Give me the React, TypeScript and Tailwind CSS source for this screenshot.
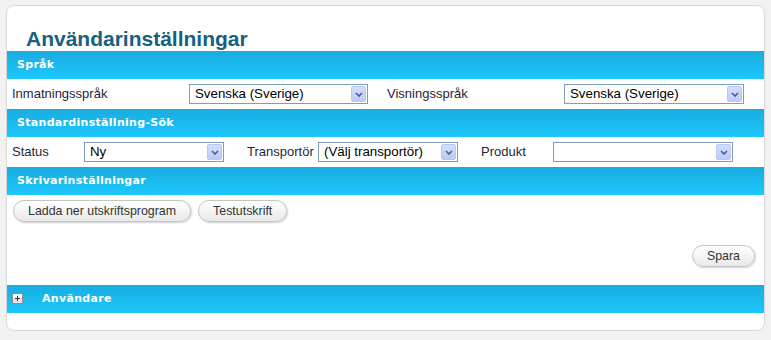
const arial = { fontFamily: '"Liberation Sans", Arial, sans-serif' };
const verdana = { fontFamily: '"DejaVu Sans", Verdana, sans-serif' };

function Bar({ title, plus }: { title: string; plus?: boolean }) {
  return (
    <div
      className="flex h-[28px] items-center bg-gradient-to-b from-[#19acdf] to-[#1cc8fd] pl-[10px] pt-[1px] text-[11px] font-bold tracking-[0.3px] text-white"
      style={verdana}
    >
      {plus && (
        <svg width="11" height="11" viewBox="0 0 11 11" className="-ml-[5px] mr-[19px] -mt-[2px]">
          <rect x="0.5" y="0.5" width="10" height="10" fill="#e6e6e6" stroke="#8c8c8c" />
          <rect x="1" y="1" width="9" height="4" fill="#fafafa" />
          <path d="M3 5.5h5M5.5 3v5" stroke="#333" strokeWidth="1" />
        </svg>
      )}
      <span>{title}</span>
    </div>
  );
}

function Select({ value, width }: { value: string; width: string }) {
  return (
    <div className={`flex h-[20px] ${width} items-center justify-between border border-[#7f9db9] bg-white`}>
      <span className="pl-[5px] text-[13.3px] text-black" style={arial}>
        {value}
      </span>
      <div className="mr-[1px] flex h-[16px] w-[15px] items-center justify-center rounded-[2px] border border-[#b8c8ef] bg-gradient-to-b from-[#d3defc] to-[#b9cbf6]">
        <svg width="8" height="5" viewBox="0 0 8 5">
          <path d="M1 1l3 3 3-3" fill="none" stroke="#4a5d88" strokeWidth="1.6" />
        </svg>
      </div>
    </div>
  );
}

function Btn({ label }: { label: string }) {
  return (
    <button
      className="h-[22px] rounded-full border border-[#c4c4c4] bg-gradient-to-b from-white to-[#e9e9e9] px-[14px] text-[12.4px] text-[#333] shadow-[1px_1px_2px_rgba(0,0,0,0.18)]"
      style={arial}
    >
      {label}
    </button>
  );
}

function Label({ text, width }: { text: string; width: string }) {
  return (
    <span className={`${width} shrink-0 text-[13px] text-[#1f1f36]`} style={arial}>
      {text}
    </span>
  );
}

export default function App() {
  return (
    <div className="min-h-[340px] bg-[#f1f1f1] pt-[5px]">
      <div className="ml-[6px] w-[759px] overflow-hidden rounded-[8px] border border-[#d8d8d8] bg-white">
        <div
          className="h-[45px] pl-[19px] pt-[22px] text-[21px] font-bold leading-[21px] text-[#17607f]"
          style={arial}
        >
          Användarinställningar
        </div>

        <Bar title="Språk" />
        <div className="flex h-[30px] items-center pl-[5px]">
          <Label text="Inmatningsspråk" width="w-[177px]" />
          <Select value="Svenska (Sverige)" width="w-[179px]" />
          <div className="w-[19px]" />
          <Label text="Visningsspråk" width="w-[177px]" />
          <Select value="Svenska (Sverige)" width="w-[180px]" />
        </div>

        <Bar title="Standardinställning-Sök" />
        <div className="flex h-[30px] items-center pl-[5px]">
          <Label text="Status" width="w-[72px]" />
          <Select value="Ny" width="w-[140px]" />
          <div className="w-[23px]" />
          <Label text="Transportör" width="w-[71px]" />
          <Select value="(Välj transportör)" width="w-[140px]" />
          <div className="w-[23px]" />
          <Label text="Produkt" width="w-[72px]" />
          <Select value="" width="w-[180px]" />
        </div>

        <Bar title="Skrivarinställningar" />
        <div className="flex h-[90px] flex-col">
          <div className="flex gap-[7px] pl-[6px] pt-[5px]">
            <Btn label="Ladda ner utskriftsprogram" />
            <Btn label="Testutskrift" />
          </div>
          <div className="flex justify-end pr-[9px] pt-[23px]">
            <Btn label="Spara" />
          </div>
        </div>

        <Bar title="Användare" plus />
        <div className="h-[17px]" />
      </div>
    </div>
  );
}
